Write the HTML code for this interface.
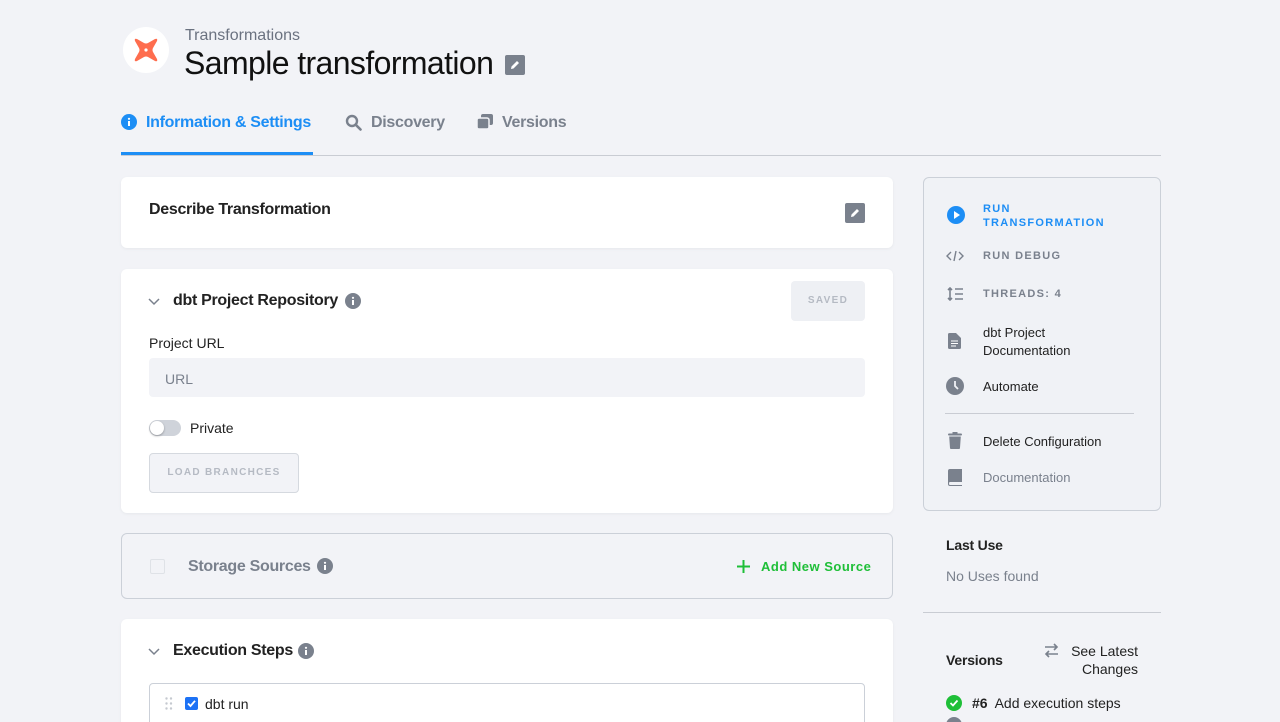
<!DOCTYPE html>
<html><head><meta charset="utf-8"><style>
*{box-sizing:border-box;margin:0;padding:0}
html,body{width:1280px;height:722px;overflow:hidden}
body{background:#f2f3f7;font-family:"Liberation Sans",sans-serif;color:#222;position:relative}
.a{position:absolute;white-space:nowrap}
.card{position:absolute;background:#fff;border-radius:6px;box-shadow:0 1px 3px rgba(0,0,0,.05)}
.t16{font-size:16px}
.b{font-weight:bold;letter-spacing:-0.3px}
.cap{font-size:11px;font-weight:bold;letter-spacing:1.3px}
.side{font-size:13px;color:#222}
</style></head><body>
<div class="a" style="left:123px;top:27px;width:46px;height:46px;border-radius:50%;background:#fff"></div>
<svg class="a" style="left:131px;top:35px" width="30" height="30" viewBox="0 0 30 30"><path d="M4 6 Q3 3 6 4 L13 8 Q15 9 17 8 L24 4 Q27 3 26 6 L22 13 Q21 15 22 17 L26 24 Q27 27 24 26 L17 22 Q15 21 13 22 L6 26 Q3 27 4 24 L8 17 Q9 15 8 13Z" fill="#fe6d4e"/><circle cx="15" cy="15" r="1.6" fill="#fff"/></svg>
<div class="a" style="left:185px;top:27px;font-size:16px;color:#6b7280">Transformations</div>
<div class="a" style="left:184px;top:45px;font-size:32px;color:#111;letter-spacing:-0.6px">Sample transformation</div>
<div class="a" style="left:505px;top:55px;width:20px;height:20px;background:#7a818d;border-radius:2px"></div>
<svg class="a" style="left:508px;top:58px" width="14" height="14" viewBox="0 0 14 14"><path d="M3 11 L3.5 8.5 L9 3 L11 5 L5.5 10.5Z" fill="#fff"/></svg>
<svg class="a" style="left:121px;top:114px" width="16" height="16"><circle cx="8" cy="8" r="8" fill="#1d8ef5"/><rect x="7" y="7" width="2" height="5" fill="#fff"/><circle cx="8" cy="4.8" r="1.1" fill="#fff"/></svg>
<div class="a t16 b" style="left:146px;top:114px;color:#1d8ef5">Information &amp; Settings</div>
<svg class="a" style="left:345px;top:114px" width="17" height="17"><circle cx="7" cy="7" r="5" fill="none" stroke="#7a818d" stroke-width="2.4"/><path d="M11 11 L15.5 15.5" stroke="#7a818d" stroke-width="2.6" stroke-linecap="round"/></svg>
<div class="a t16 b" style="left:371px;top:114px;color:#7a818d">Discovery</div>
<svg class="a" style="left:477px;top:114px" width="17" height="16"><rect x="4" y="0" width="12" height="11" rx="2" fill="#7a818d"/><rect x="0" y="4" width="12" height="11" rx="2" fill="#7a818d" stroke="#f2f3f7" stroke-width="1.5"/></svg>
<div class="a t16 b" style="left:502px;top:114px;color:#7a818d">Versions</div>
<div class="a" style="left:121px;top:155px;width:1040px;height:1px;background:#c9ccd3"></div>
<div class="a" style="left:121px;top:152px;width:192px;height:3px;background:#1d8ef5"></div>
<div class="card" style="left:121px;top:177px;width:772px;height:71px"></div>
<div class="a t16 b" style="left:149px;top:201px;color:#222">Describe Transformation</div>
<div class="a" style="left:845px;top:203px;width:20px;height:20px;background:#7a818d;border-radius:2px"></div>
<svg class="a" style="left:848px;top:206px" width="14" height="14" viewBox="0 0 14 14"><path d="M3 11 L3.5 8.5 L9 3 L11 5 L5.5 10.5Z" fill="#fff"/></svg>
<div class="card" style="left:121px;top:269px;width:772px;height:244px"></div>
<svg class="a" style="left:148px;top:298px" width="12" height="8"><path d="M1 1 L6 6 L11 1" fill="none" stroke="#7a818d" stroke-width="1.5"/></svg>
<div class="a t16 b" style="left:173px;top:292px">dbt Project Repository</div>
<svg class="a" style="left:345px;top:293px" width="16" height="16"><circle cx="8" cy="8" r="8" fill="#7a818d"/><rect x="7" y="7" width="2" height="5" fill="#fff"/><circle cx="8" cy="4.8" r="1.1" fill="#fff"/></svg>
<div class="a cap" style="left:791px;top:281px;width:74px;height:40px;background:#eef0f4;border-radius:4px;color:#b5bac3;line-height:40px;text-align:center;font-size:10px">SAVED</div>
<div class="a" style="left:149px;top:335px;font-size:14px">Project URL</div>
<div class="a" style="left:149px;top:358px;width:716px;height:39px;background:#f2f3f7;border-radius:4px;font-size:14px;color:#7a818d;padding:13px 16px 0">URL</div>
<div class="a" style="left:149px;top:420px;width:32px;height:16px;border-radius:8px;background:#cfd3da"></div>
<div class="a" style="left:150px;top:421px;width:14px;height:14px;border-radius:50%;background:#fff;box-shadow:0 1px 2px rgba(0,0,0,.3)"></div>
<div class="a" style="left:190px;top:420px;font-size:14px">Private</div>
<div class="a cap" style="left:149px;top:453px;width:150px;height:40px;background:#f2f3f7;border:1px solid #d5d9df;border-radius:4px;color:#b5bac3;line-height:38px;text-align:center;font-size:10px">LOAD BRANCHCES</div>
<div class="a" style="left:121px;top:533px;width:772px;height:66px;border:1px solid #cbd0d8;border-radius:6px"></div>
<div class="a" style="left:150px;top:559px;width:15px;height:15px;border:1px solid #dfe2e7;border-radius:2px"></div>
<div class="a t16 b" style="left:188px;top:558px;color:#7a818d">Storage Sources</div>
<svg class="a" style="left:317px;top:558px" width="16" height="16"><circle cx="8" cy="8" r="8" fill="#7a818d"/><rect x="7" y="7" width="2" height="5" fill="#fff"/><circle cx="8" cy="4.8" r="1.1" fill="#fff"/></svg>
<svg class="a" style="left:737px;top:560px" width="13" height="13"><path d="M6.5 0V13M0 6.5H13" stroke="#1fbf38" stroke-width="2"/></svg>
<div class="a" style="left:761px;top:559px;font-size:13px;font-weight:bold;color:#1fbf38;letter-spacing:.5px">Add New Source</div>
<div class="card" style="left:121px;top:619px;width:772px;height:120px"></div>
<svg class="a" style="left:148px;top:648px" width="12" height="8"><path d="M1 1 L6 6 L11 1" fill="none" stroke="#7a818d" stroke-width="1.5"/></svg>
<div class="a t16 b" style="left:173px;top:642px">Execution Steps</div>
<svg class="a" style="left:298px;top:643px" width="16" height="16"><circle cx="8" cy="8" r="8" fill="#7a818d"/><rect x="7" y="7" width="2" height="5" fill="#fff"/><circle cx="8" cy="4.8" r="1.1" fill="#fff"/></svg>
<div class="a" style="left:149px;top:683px;width:716px;height:50px;border:1px solid #cbd0d8;border-radius:4px"></div>
<svg class="a" style="left:165px;top:697px" width="8" height="13"><g fill="#c5c9d0"><circle cx="1.5" cy="1.5" r="1.2"/><circle cx="6" cy="1.5" r="1.2"/><circle cx="1.5" cy="6.5" r="1.2"/><circle cx="6" cy="6.5" r="1.2"/><circle cx="1.5" cy="11.5" r="1.2"/><circle cx="6" cy="11.5" r="1.2"/></g></svg>
<svg class="a" style="left:185px;top:697px" width="13" height="13"><rect width="13" height="13" rx="2" fill="#1d72f5"/><path d="M3 6.5 L5.5 9 L10 3.8" fill="none" stroke="#fff" stroke-width="1.8"/></svg>
<div class="a" style="left:205px;top:696px;font-size:14px">dbt run</div>
<div class="a" style="left:923px;top:177px;width:238px;height:334px;border:1px solid #cbd0d8;border-radius:6px;background:#f0f2f6"></div>
<svg class="a" style="left:947px;top:206px" width="18" height="18"><circle cx="9" cy="9" r="9" fill="#1d8ef5"/><path d="M7 5 L13 9 L7 13Z" fill="#fff"/></svg>
<div class="a cap" style="left:983px;top:202px;color:#1d8ef5;line-height:14px">RUN<br>TRANSFORMATION</div>
<svg class="a" style="left:946px;top:250px" width="18" height="12"><path d="M5 2 L1 6 L5 10 M13 2 L17 6 L13 10 M10 1 L8 11" fill="none" stroke="#7a818d" stroke-width="1.4"/></svg>
<div class="a cap" style="left:983px;top:250px;color:#7a818d">RUN DEBUG</div>
<svg class="a" style="left:947px;top:287px" width="17" height="14"><path d="M3 1V13M1 3L3 1L5 3M1 11L3 13L5 11M8 2H16M8 7H16M8 12H16" fill="none" stroke="#7a818d" stroke-width="1.6"/></svg>
<div class="a cap" style="left:983px;top:288px;color:#7a818d">THREADS: 4</div>
<svg class="a" style="left:948px;top:333px" width="13" height="16"><path d="M0 1.5Q0 0 1.5 0H8L13 5V14.5Q13 16 11.5 16H1.5Q0 16 0 14.5Z" fill="#7a818d"/><path d="M3 8H10M3 10.5H10M3 13H8" stroke="#fff" stroke-width="1"/></svg>
<div class="a side" style="left:983px;top:324px;line-height:18px">dbt Project<br>Documentation</div>
<svg class="a" style="left:946px;top:377px" width="18" height="18"><circle cx="9" cy="9" r="9" fill="#7a818d"/><path d="M9 4V9L12 12" fill="none" stroke="#f0f2f6" stroke-width="1.8"/></svg>
<div class="a side" style="left:983px;top:379px">Automate</div>
<div class="a" style="left:945px;top:413px;width:189px;height:1px;background:#c9ccd3"></div>
<svg class="a" style="left:948px;top:432px" width="14" height="17"><rect x="0" y="1.5" width="14" height="2" rx="1" fill="#7a818d"/><rect x="4.5" y="0" width="5" height="2" fill="#7a818d"/><path d="M1.2 4.5H12.8L12 16Q12 17 11 17H3Q2 17 2 16Z" fill="#7a818d"/></svg>
<div class="a side" style="left:983px;top:434px">Delete Configuration</div>
<svg class="a" style="left:948px;top:469px" width="14" height="17"><path d="M0 2Q0 0 2 0H14V13H2Q1 13 1 14.5Q1 16 2 16H14V17H2Q0 17 0 15Z" fill="#7a818d"/></svg>
<div class="a side" style="left:983px;top:470px;color:#7a818d">Documentation</div>
<div class="a" style="left:946px;top:537px;font-size:14px;font-weight:bold;letter-spacing:-0.2px">Last Use</div>
<div class="a" style="left:946px;top:568px;font-size:14px;color:#7a818d">No Uses found</div>
<div class="a" style="left:923px;top:612px;width:238px;height:1px;background:#c9ccd3"></div>
<div class="a" style="left:946px;top:652px;font-size:14px;font-weight:bold;letter-spacing:-0.2px">Versions</div>
<svg class="a" style="left:1044px;top:643px" width="15" height="15"><path d="M1 4H13M10 1L13 4L10 7M14 11H2M5 8L2 11L5 14" fill="none" stroke="#7a818d" stroke-width="1.6"/></svg>
<div class="a" style="left:1040px;top:642px;width:98px;text-align:right;font-size:14px;line-height:18px">See Latest<br>Changes</div>
<svg class="a" style="left:946px;top:695px" width="16" height="16"><circle cx="8" cy="8" r="8" fill="#1fbf38"/><path d="M4.5 8L7 10.5L11.5 5.5" fill="none" stroke="#fff" stroke-width="1.8"/></svg>
<div class="a" style="left:972px;top:695px;font-size:14px"><b>#6</b>&nbsp; Add execution steps</div>
<div class="a" style="left:946px;top:717px;width:16px;height:16px;border-radius:50%;background:#7a818d"></div>
</body></html>
